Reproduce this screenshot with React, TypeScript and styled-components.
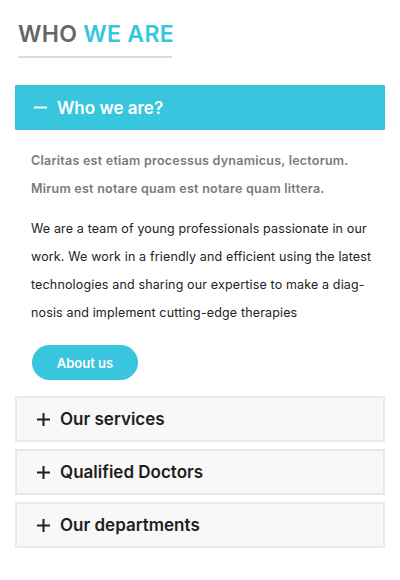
import React from "react";
import styled, { createGlobalStyle } from "styled-components";

const Global = createGlobalStyle`
  html, body { margin: 0; padding: 0; background: #fff; }
  body { font-family: "Inter", "Open Sans", sans-serif; -webkit-font-smoothing: antialiased; }
`;

const BLUE = "#38c5de";

const Page = styled.div`
  width: 400px;
  padding: 0 15px;
  box-sizing: border-box;
`;

const TitleWrap = styled.div`
  padding-top: 20px;
  padding-left: 3px;
`;

const Title = styled.h2`
  margin: 0;
  font-size: 23px;
  line-height: 28px;
  font-weight: 600;
  color: #666;
  letter-spacing: 0.3px;
  white-space: nowrap;
  span { color: ${BLUE}; }
`;

const Rule = styled.div`
  margin-top: 8px;
  width: 154px;
  height: 2px;
  background: #dcdcdc;
`;

const Accordion = styled.div`
  margin-top: 27px;
  display: flex;
  flex-direction: column;
`;

const ActiveHeader = styled.div`
  height: 45px;
  background: ${BLUE};
  display: flex;
  align-items: center;
  padding-left: 19px;
  gap: 10px;
  color: #fff;
  font-size: 17px;
  font-weight: 600;
  border-radius: 1px;
`;

const Panel = styled.div`
  padding: 17px 16px 16px 16px;
`;

const Lead = styled.p`
  margin: 0;
  font-size: 12.5px;
  line-height: 28px;
  font-weight: 600;
  color: #7a7a7a;
  letter-spacing: 0.25px;
  white-space: nowrap;
`;

const Body = styled.p`
  margin: 12px 0 0 0;
  font-size: 12.5px;
  line-height: 28px;
  font-weight: 400;
  color: #222;
  letter-spacing: 0.15px;
  white-space: nowrap;
`;

const Button = styled.button`
  display: block;
  margin-top: 18px;
  margin-left: 1px;
  width: 106px;
  height: 35px;
  border: none;
  border-radius: 18px;
  background: ${BLUE};
  color: #fff;
  font-family: inherit;
  font-size: 13px;
  font-weight: 600;
  cursor: pointer;
`;

const Items = styled.div`
  display: flex;
  flex-direction: column;
  gap: 7px;
`;

const Item = styled.div`
  height: 46px;
  box-sizing: border-box;
  background: #f8f8f8;
  border: 2px solid #e9e9e9;
  display: flex;
  align-items: center;
  padding-left: 20px;
  gap: 10px;
  font-size: 17px;
  font-weight: 600;
  color: #1e1e1e;
`;

const Icon = ({ minus, color }: { minus?: boolean; color: string }) => (
  <svg width="13" height="13" viewBox="0 0 13 13">
    <path d="M0 6.5H13" stroke={color} strokeWidth="2" />
    {!minus && <path d="M6.5 0V13" stroke={color} strokeWidth="2" />}
  </svg>
);

export default function App() {
  return (
    <Page>
      <Global />
      <TitleWrap>
        <Title>
          WHO <span>WE ARE</span>
        </Title>
        <Rule />
      </TitleWrap>
      <Accordion>
        <ActiveHeader>
          <Icon minus color="#fff" />
          Who we are?
        </ActiveHeader>
        <Panel>
          <Lead>
            Claritas est etiam processus dynamicus, lectorum.
            <br />
            Mirum est notare quam est notare quam littera.
          </Lead>
          <Body>
            We are a team of young professionals passionate in our
            <br />
            work. We work in a friendly and efficient using the latest
            <br />
            technologies and sharing our expertise to make a diag-
            <br />
            nosis and implement cutting-edge therapies
          </Body>
          <Button>About us</Button>
        </Panel>
        <Items>
          {["Our services", "Qualified Doctors", "Our departments"].map((t) => (
            <Item key={t}>
              <Icon color="#1e1e1e" />
              {t}
            </Item>
          ))}
        </Items>
      </Accordion>
    </Page>
  );
}
